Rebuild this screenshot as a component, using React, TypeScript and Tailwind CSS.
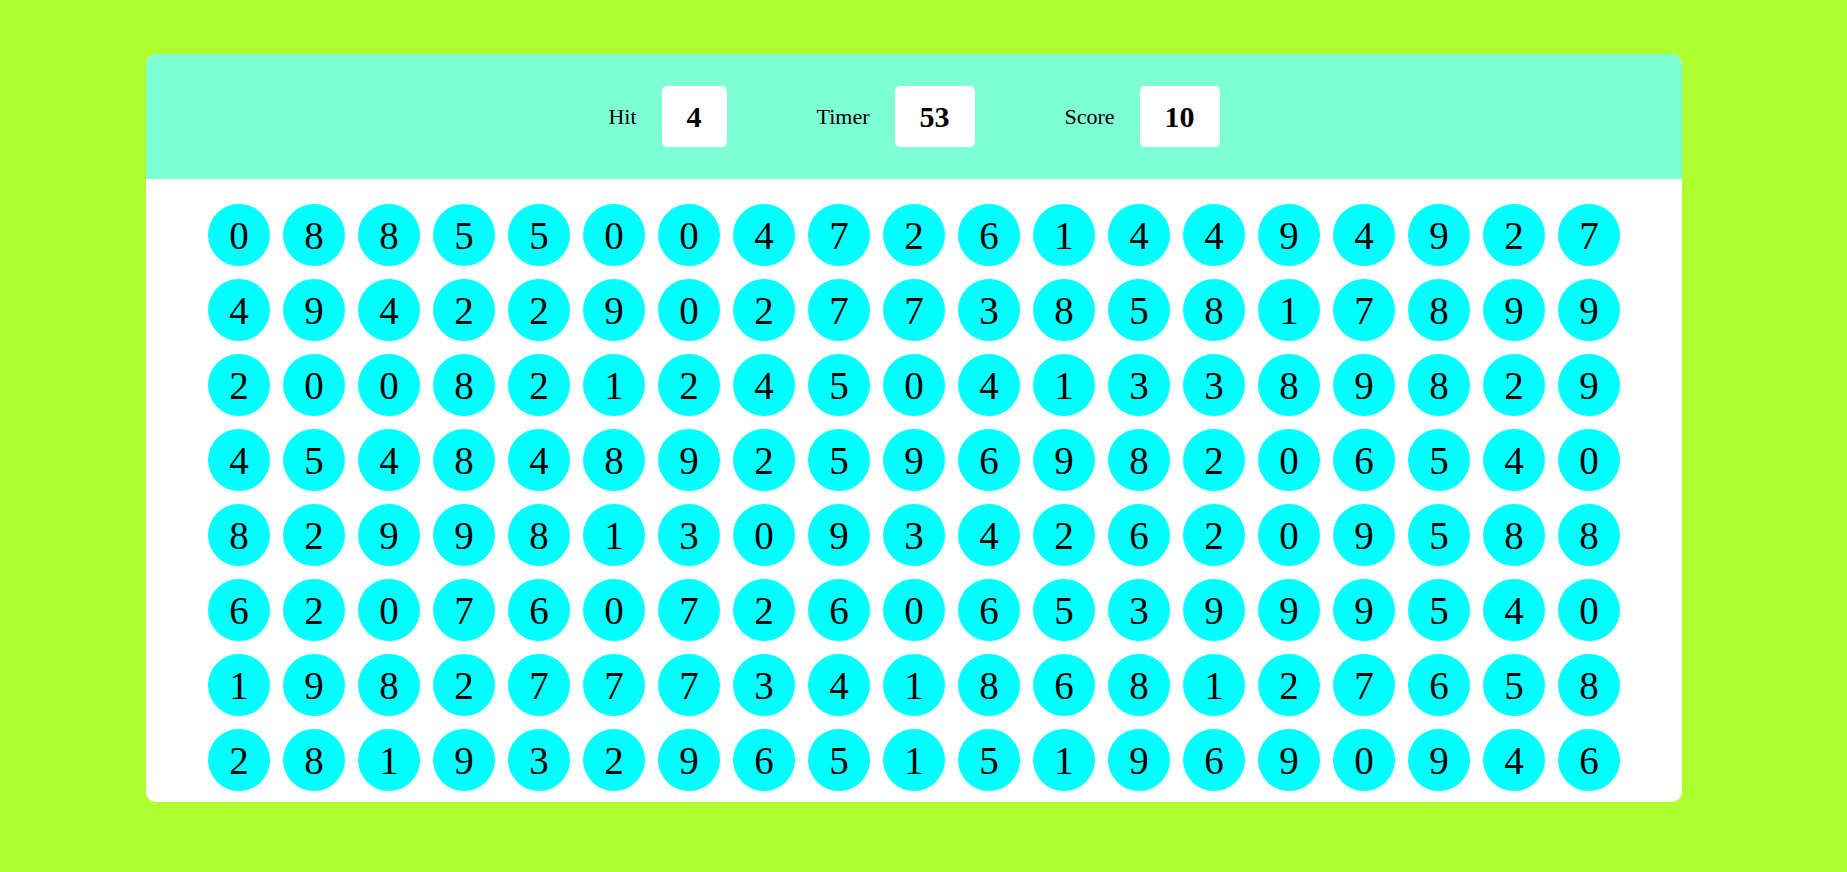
const rows = [
  '0885500472614494927',
  '4942290277385817899',
  '2008212450413389829',
  '4548489259698206540',
  '8299813093426209588',
  '6207607260653999540',
  '1982777341868127658',
  '2819329651519690946',
]

function Stat({ label, value }: { label: string; value: number }) {
  return (
    <div className="flex items-center gap-[25px]">
      <span className="text-[22px] text-black">{label}</span>
      <div className="flex h-[61px] items-center rounded-[5px] bg-white px-[25px] text-[30px] font-bold leading-none text-black">
        {value}
      </div>
    </div>
  )
}

export default function App() {
  return (
    <div className="min-h-[872px] bg-[#adff2f] pl-[146px] pt-[54px] font-['Liberation_Serif','Times_New_Roman',serif]">
      <div className="w-[1536px] overflow-hidden rounded-[10px] bg-white">
        <header className="flex h-[125px] items-center justify-center gap-[90px] bg-[#7fffd4]">
          <Stat label="Hit" value={4} />
          <Stat label="Timer" value={53} />
          <Stat label="Score" value={10} />
        </header>

        <div className="flex h-[623px] flex-col items-center gap-[13px] pt-[25px]">
          {rows.map((row, r) => (
            <div key={r} className="flex gap-[13px]">
              {row.split('').map((d, i) => (
                <div
                  key={i}
                  className="flex h-[62px] w-[62px] items-center justify-center rounded-full bg-[#00ffff] text-[39px] leading-none text-black"
                >
                  {d}
                </div>
              ))}
            </div>
          ))}
        </div>
      </div>
    </div>
  )
}
